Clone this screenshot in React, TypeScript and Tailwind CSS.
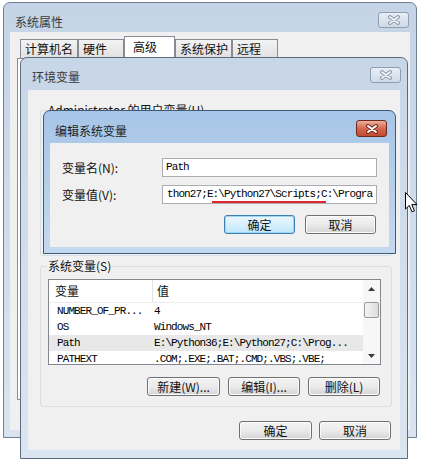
import React from "react";

const mono = "font-['Liberation_Mono',monospace] text-[11px] tracking-[-0.9px] text-black";

function CloseBtn({ active, className = "" }: { active?: boolean; className?: string }) {
  if (active) {
    return (
      <div className={`flex h-[17px] w-[31px] items-center justify-center rounded-[3px] border border-[#6d2a1c] bg-linear-to-b from-[#eab0a0] via-[#d5664c] to-[#c24a30] ${className}`}>
        <svg width="12" height="10" viewBox="0 0 12 10">
          <path d="M2 2 L10 8 M10 2 L2 8" stroke="#6a2214" strokeWidth="3.8" strokeLinecap="round" />
          <path d="M2 2 L10 8 M10 2 L2 8" stroke="#ffffff" strokeWidth="2" strokeLinecap="round" />
        </svg>
      </div>
    );
  }
  return (
    <div className={`flex h-[16px] w-[31px] items-center justify-center rounded-[3px] border border-[#8f9db0] bg-linear-to-b from-[#e8eef6] to-[#cfd9e6] ${className}`}>
      <svg width="12" height="10" viewBox="0 0 12 10">
        <path d="M2 2 L10 8 M10 2 L2 8" stroke="#8a96a6" strokeWidth="3.8" strokeLinecap="round" />
        <path d="M2 2 L10 8 M10 2 L2 8" stroke="#eef2f7" strokeWidth="2" strokeLinecap="round" />
      </svg>
    </div>
  );
}

function Btn({ label, w, focus }: { label: string; w: string; focus?: boolean }) {
  return (
    <div
      className={`flex h-[19px] ${w} items-center justify-center rounded-[3px] border text-[12px] leading-[14px] text-[#111] ${
        focus
          ? "border-[#3c7fb1] bg-linear-to-b from-[#eaf6fd] via-[#d9f0fc] to-[#bee6fd] shadow-[inset_0_0_0_1px_#9fd5f5]"
          : "border-[#707070] bg-linear-to-b from-[#f3f3f3] via-[#ebebeb] to-[#d4d4d4] shadow-[inset_0_0_0_1px_#fcfcfc]"
      }`}
    >
      {label}
    </div>
  );
}

function Tab({ label, w, selected }: { label: string; w: string; selected?: boolean }) {
  return (
    <div
      className={`${w} flex border border-b-0 border-[#898c95] text-[12px] leading-[14px] text-[#111] ${
        selected ? "h-[22px] items-start bg-white pl-[8px] pt-[3px]" : "h-[19px] items-center bg-linear-to-b from-[#f3f3f3] to-[#e1e1e1] pl-[4px]"
      }`}
    >
      {label}
    </div>
  );
}

const rows = [
  ["NUMBER_OF_PR...", "4"],
  ["OS", "Windows_NT"],
  ["Path", "E:\\Python36;E:\\Python27;C:\\Prog..."],
  ["PATHEXT", ".COM;.EXE;.BAT;.CMD;.VBS;.VBE;"],
];

export default function App() {
  return (
    <div className="relative h-[461px] w-[421px] overflow-hidden bg-white font-['Noto_Sans_CJK_SC',sans-serif]">
      {/* 系统属性 */}
      <div className="absolute left-[3px] top-[2px] flex h-[436px] w-[414px] flex-col rounded-t-[7px] border border-[#6f7f92] bg-linear-to-b from-[#c4d4e6] to-[#d9e4f0]">
        <div className="flex h-[29px] items-start justify-between pl-[11px] pr-[7px]">
          <span className="mt-[12px] text-[12px] leading-[14px] text-[#3a3a3a]">系统属性</span>
          <CloseBtn className="mt-[9px]" />
        </div>
        <div className="mx-[6px] mb-[7px] flex flex-1 flex-col bg-[#f0f0f0] px-[10px] pt-[4px]">
          <div className="flex h-[22px] items-end">
            <Tab label="计算机名" w="w-[58px]" />
            <Tab label="硬件" w="w-[46px]" />
            <Tab label="高级" w="w-[51px]" selected />
            <Tab label="系统保护" w="w-[57px]" />
            <Tab label="远程" w="w-[46px]" />
          </div>
          <div className="-ml-[3px] mb-[30px] flex-1 border border-[#898c95] bg-white" />
        </div>
      </div>

      {/* 环境变量 */}
      <div className="absolute left-[20px] top-[57px] flex h-[402px] w-[388px] flex-col rounded-t-[7px] border border-[#5d6b7c] bg-linear-to-b from-[#c7d6e8] to-[#dbe5f1]">
        <div className="flex h-[32px] items-start justify-between pl-[11px] pr-[6px]">
          <span className="mt-[12px] text-[12px] leading-[14px] text-[#3a3a3a]">环境变量</span>
          <CloseBtn className="mt-[9px]" />
        </div>
        <div className="mx-[7px] mb-[8px] flex flex-1 flex-col bg-[#f0f0f0]">
          <div className="ml-[12px] mr-[8px] mt-[20px] h-[146px] rounded-[3px] border border-[#d5dfe5]">
            <div className="-mt-[8px] ml-[6px] w-fit bg-[#f0f0f0] px-[1px] text-[12px] leading-[14px] text-[#111]">
              Administrator 的用户变量(U)
            </div>
          </div>

          <div className="ml-[12px] mr-[8px] mt-[10px] rounded-[3px] border border-[#d5dfe5] pb-[10px]">
            <div className="-mt-[8px] ml-[6px] w-fit bg-[#f0f0f0] px-[1px] text-[12px] leading-[14px] text-[#111]">
              系统变量(S)
            </div>
            <div className="ml-[7px] mt-[6px] flex h-[86px] w-[333px] overflow-hidden border border-[#828790] bg-white">
              <div className="flex w-[314px] flex-col overflow-hidden">
                <div className="flex h-[23px] shrink-0 items-center border-b border-[#ececec] text-[12px] leading-[14px] text-[#111]">
                  <div className="flex h-full w-[104px] items-center border-r border-[#e3e3e3] pl-[6px]">变量</div>
                  <div className="pl-[4px]">值</div>
                </div>
                {rows.map(([k, v], i) => (
                  <div key={k} className={`flex h-[16px] shrink-0 items-center whitespace-nowrap ${i === 2 ? "bg-[#e8e8e8]" : ""} ${mono}`}>
                    <div className="w-[105px] pl-[8px]">{k}</div>
                    <div>{v}</div>
                  </div>
                ))}
              </div>
              <div className="flex w-[17px] flex-col items-center bg-[#f7f7f7]">
                <div className="flex h-[17px] w-full items-center justify-center">
                  <svg width="7" height="4" viewBox="0 0 7 4"><path d="M0 4 L3.5 0 L7 4 Z" fill="#3a3a3a" /></svg>
                </div>
                <div className="mt-[5px] h-[16px] w-[15px] rounded-[2px] border border-[#9a9a9a] bg-linear-to-r from-[#f4f4f4] to-[#dcdcdc]" />
                <div className="flex-1" />
                <div className="flex h-[17px] w-full items-center justify-center">
                  <svg width="7" height="4" viewBox="0 0 7 4"><path d="M0 0 L7 0 L3.5 4 Z" fill="#3a3a3a" /></svg>
                </div>
              </div>
            </div>
            <div className="mt-[12px] flex justify-end gap-[8px] pr-[11px]">
              <Btn label="新建(W)..." w="w-[73px]" />
              <Btn label="编辑(I)..." w="w-[72px]" />
              <Btn label="删除(L)" w="w-[72px]" />
            </div>
          </div>

          <div className="mt-[14px] flex justify-end gap-[7px] pr-[9px]">
            <Btn label="确定" w="w-[73px]" />
            <Btn label="取消" w="w-[72px]" />
          </div>
        </div>
      </div>

      {/* 编辑系统变量 */}
      <div className="absolute left-[43px] top-[110px] flex h-[144px] w-[353px] flex-col rounded-t-[7px] border border-[#3d5a7a] bg-linear-to-b from-[#a7c5e7] to-[#c3d9ef]">
        <div className="flex h-[32px] items-start justify-between pl-[11px] pr-[8px]">
          <span className="mt-[13px] text-[12px] leading-[14px] text-[#1e1e1e]">编辑系统变量</span>
          <CloseBtn active className="mt-[9px]" />
        </div>
        <div className="mx-[6px] mb-[6px] flex flex-1 flex-col bg-[#f0f0f0] pl-[12px] pr-[12px]">
          <div className="mt-[15px] flex items-center">
            <div className="w-[100px] text-[12px] leading-[14px] text-[#111]">变量名(N):</div>
            <div className={`flex h-[19px] w-[215px] items-center border border-[#abadb3] bg-white pl-[3px] ${mono}`}>Path</div>
          </div>
          <div className="mt-[8px] flex items-center">
            <div className="w-[100px] text-[12px] leading-[14px] text-[#111]">变量值(V):</div>
            <div className={`flex h-[19px] w-[215px] items-center overflow-hidden whitespace-nowrap border border-[#abadb3] bg-white pl-[4px] ${mono}`}>
              thon27;E:\Python27\Scripts;C:\Progra
            </div>
          </div>
          <div className="mt-[11px] flex justify-end gap-[10px] pr-[1px]">
            <Btn label="确定" w="w-[71px]" focus />
            <Btn label="取消" w="w-[71px]" />
          </div>
        </div>
      </div>

      {/* red annotation underline */}
      <div className="absolute left-[212px] top-[201px] h-[2px] w-[114px] bg-[#e0262a]" />

      {/* mouse cursor */}
      <svg className="absolute left-[405px] top-[192px]" width="13" height="21" viewBox="0 0 13 21">
        <path d="M0.5 0.5 L0.5 17 L4.3 13.4 L7 19.8 L9.4 18.8 L6.8 12.6 L12 12.6 Z" fill="#ffffff" stroke="#000000" strokeWidth="1" strokeLinejoin="round" />
      </svg>
    </div>
  );
}
